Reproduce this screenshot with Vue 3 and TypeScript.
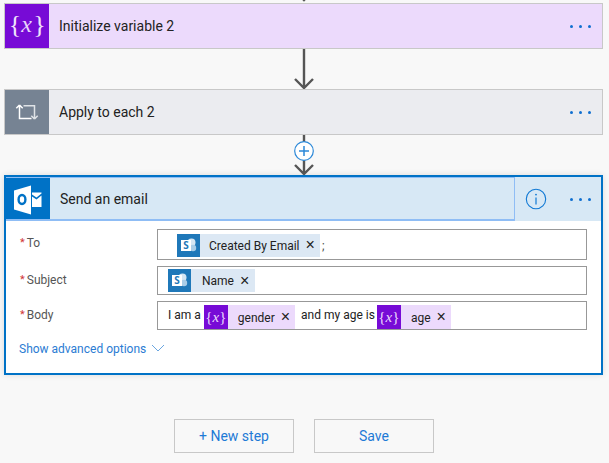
<script setup lang="ts">
const topCards = [
  { title: 'Initialize variable 2', kind: 'var' },
  { title: 'Apply to each 2', kind: 'loop' },
]
</script>

<template>
  <div class="page">
    <div class="stub">
      <svg width="24" height="3" viewBox="0 0 24 3"><path d="M3 -9 L12 0 L21 -9 M12 -12 V1" class="arrow" /></svg>
    </div>

    <template v-for="(c, i) in topCards" :key="c.title">
      <div class="card" :class="c.kind">
        <div class="card-icon">
          <svg v-if="c.kind === 'var'" width="44" height="44" viewBox="0 0 44 44">
            <text x="10" y="29" text-anchor="middle" class="brace">{</text>
            <text x="21.5" y="27.5" text-anchor="middle" class="varx">x</text>
            <text x="34.5" y="29" text-anchor="middle" class="brace">}</text>
          </svg>
          <svg v-else width="44" height="44" viewBox="0 0 44 44">
            <path d="M14.5 15 V28.5 H26.5 M14.5 15 L11.3 18.2 M14.5 15 L17.7 18.2" class="loop-line" />
            <path d="M18.5 15.7 H29.5 V29 M29.5 29 L26.3 25.8 M29.5 29 L32.7 25.8" class="loop-line dim" />
          </svg>
        </div>
        <div class="card-title">{{ c.title }}</div>
        <div class="dots"><i></i><i></i><i></i></div>
      </div>
      <div class="connector">
        <svg width="24" height="40" viewBox="0 0 24 40">
          <path d="M12 0 V39 M3 30 L12 39 L21 30" class="arrow" />
        </svg>
        <span v-if="i === 1" class="plus">
          <svg width="20" height="20" viewBox="0 0 20 20">
            <circle cx="10" cy="10" r="9.3" fill="#fff" stroke="#2b88d8" stroke-width="1.2" />
            <path d="M10 5 V15 M5 10 H15" stroke="#2b88d8" stroke-width="1.5" />
          </svg>
        </span>
      </div>
    </template>

    <section class="editor">
      <header class="editor-head">
        <div class="head-main">
          <div class="outlook">
            <svg width="32" height="32" viewBox="0 0 32 32">
              <path d="M2 7.5 L19 2.5 V31.5 L2 26.5 Z" fill="#fff" />
              <ellipse cx="10" cy="16.5" rx="3.4" ry="4.5" fill="none" stroke="#0072c6" stroke-width="2.4" />
              <path d="M20 9.5 H29.5 V10.5 L24.5 14.5 L20 11.5 Z M20 13.5 L24.5 16.5 L29.5 12.5 V24 H20 Z" fill="#fff" />
            </svg>
          </div>
          <div class="head-title">Send an email</div>
        </div>
        <div class="head-tools">
          <svg width="22" height="22" viewBox="0 0 22 22">
            <circle cx="11" cy="11" r="9.7" fill="none" stroke="#0f78d4" stroke-width="1.1" />
            <path d="M11 9.5 V16.5" stroke="#0f78d4" stroke-width="1.2" />
            <circle cx="11" cy="6.6" r="0.9" fill="#0f78d4" />
          </svg>
          <div class="dots head-dots"><i></i><i></i><i></i></div>
        </div>
      </header>

      <div class="form">
        <div class="row row-to">
          <div class="label"><b>*</b>To</div>
          <div class="field to-field">
            <span class="token sp">
              <span class="tok-icon">
                <svg width="23" height="23" viewBox="0 0 23 23">
                  <circle cx="14.5" cy="8.5" r="4" fill="#d5e6f3" />
                  <circle cx="16" cy="14" r="3.2" fill="#a9cde8" />
                  <rect x="4" y="6" width="10" height="11" fill="#fff" />
                  <text x="9" y="15" text-anchor="middle" class="sp-s">S</text>
                </svg>
              </span>
              <span class="tok-text tt-to">Created By Email</span><span class="x">×</span>
            </span>
            <span class="semi">;</span>
          </div>
        </div>
        <div class="row row-subject">
          <div class="label"><b>*</b>Subject</div>
          <div class="field subj-field">
            <span class="token sp">
              <span class="tok-icon">
                <svg width="23" height="23" viewBox="0 0 23 23">
                  <circle cx="14.5" cy="8.5" r="4" fill="#d5e6f3" />
                  <circle cx="16" cy="14" r="3.2" fill="#a9cde8" />
                  <rect x="4" y="6" width="10" height="11" fill="#fff" />
                  <text x="9" y="15" text-anchor="middle" class="sp-s">S</text>
                </svg>
              </span>
              <span class="tok-text tt-name">Name</span><span class="x x-name">×</span>
            </span>
          </div>
        </div>
        <div class="row row-body">
          <div class="label"><b>*</b>Body</div>
          <div class="field body-field">
            <span class="plain">I am a</span>
            <span class="token va">
              <span class="tok-icon"><span class="mini">{<em>x</em>}</span></span>
              <span class="tok-text">gender</span><span class="x">×</span>
            </span>
            <span class="plain">and my age is</span>
            <span class="token va">
              <span class="tok-icon"><span class="mini">{<em>x</em>}</span></span>
              <span class="tok-text">age</span><span class="x">×</span>
            </span>
          </div>
        </div>
        <div class="advanced">
          <span>Show advanced options</span>
          <svg width="14" height="8" viewBox="0 0 14 8"><path d="M1 1 L7 7 L13 1" fill="none" stroke="#6ba6e0" stroke-width="1" /></svg>
        </div>
      </div>
    </section>

    <div class="actions">
      <button class="btn" type="button">+ New step</button>
      <button class="btn" type="button">Save</button>
    </div>
  </div>
</template>

<style>
html, body { margin: 0; background: #f8f8f8; }
</style>

<style scoped>
.page {
  width: 609px;
  height: 463px;
  overflow: hidden;
  box-sizing: border-box;
  padding: 0 6px 0 4px;
  background: #f8f8f8;
  font-family: Roboto, "Open Sans", sans-serif;
  font-size: 12px;
  color: #222;
  display: flex;
  flex-direction: column;
}
.stub { height: 3px; display: flex; justify-content: center; overflow: hidden; padding-left: 1px; }
.stub svg { display: block; }
.arrow { fill: none; stroke: #555; stroke-width: 2.4; }
.card {
  height: 46px;
  box-sizing: border-box;
  border: 1px solid #c8c8c8;
  display: flex;
  align-items: center;
}
.card.var { background: #ecdafc; }
.card.loop { background: #ebecf0; }
.card-icon { width: 44px; height: 44px; flex: none; }
.card-icon svg { display: block; }
.var .card-icon { background: #770bd6; }
.loop .card-icon { background: #768393; }
.brace { font-family: "Liberation Serif", serif; font-size: 26px; fill: #f0e4fb; }
.varx { font-family: "Liberation Serif", serif; font-style: italic; font-size: 24px; fill: #e8d6fa; }
.loop-line { fill: none; stroke: #fff; stroke-width: 1.5; }
.loop-line.dim { stroke: #dfe3e7; }
.card-title { flex: 1; padding-left: 10px; font-size: 14px; }
.dots { display: flex; gap: 6px; width: 32px; flex: none; }
.dots i { width: 3px; height: 3px; border-radius: 50%; background: #0f6fd0; }
.connector {
  height: 40px;
  display: flex;
  justify-content: center;
  position: relative;
  padding-left: 1px;
}
.connector svg { display: block; }
.plus { position: absolute; left: 290px; top: 5.5px; }
.editor {
  height: 200px;
  box-sizing: border-box;
  border: 2px solid #0072c6;
  background: #fff;
  box-shadow: 0 0 6px rgba(0, 0, 0, 0.12);
}
.editor-head {
  display: flex;
  height: 44px;
  background: #d7e8f5;
}
.head-main {
  width: 509px;
  flex: none;
  box-sizing: border-box;
  display: flex;
  align-items: center;
  border: solid #8fbdf5;
  border-width: 1px 1px 2px 0;
  border-radius: 0 0 1px 0;
}
.outlook {
  width: 44px;
  height: 41px;
  background: #0072c6;
  display: flex;
  align-items: center;
  justify-content: center;
  flex: none;
}
.head-title { padding-left: 10px; font-size: 14px; }
.head-tools { flex: 1; display: flex; align-items: center; padding-left: 10px; }
.head-tools svg { display: block; }
.head-dots { margin-left: 23px; width: auto; }
.form { padding: 8px 14px 0 13px; }
.row { display: flex; }
.row-to { height: 31px; }
.row-subject { height: 29px; margin-top: 6px; }
.row-body { height: 29px; margin-top: 6px; }
.label { width: 138px; flex: none; font-size: 12px; color: #555; box-sizing: border-box; padding: 7px 0 0 1px; }
.label b { color: #d13438; font-weight: 400; font-size: 11px; margin-right: 2px; position: relative; top: -1px; }
.field {
  flex: 1;
  box-sizing: border-box;
  border: 1px solid #989898;
  background: #fff;
  display: flex;
  align-items: center;
  min-width: 0;
}
.to-field { padding-left: 19px; }
.subj-field { padding-left: 10px; }
.body-field { padding-left: 10px; }
.token { display: flex; align-items: center; height: 23px; font-size: 12px; color: #222; }
.to-field .token { margin-top: 1px; }
.token.sp { background: #dce8f4; }
.token.va { background: #ecdafc; height: 24px; align-self: flex-end; }
.tok-icon {
  width: 23px;
  height: 100%;
  flex: none;
  display: flex;
  align-items: center;
  justify-content: center;
}
.sp .tok-icon { background: #1f78b9; }
.sp .tok-icon svg { display: block; }
.sp-s { font-family: "Open Sans", sans-serif; font-size: 10px; font-weight: 700; fill: #1f78b9; }
.va .tok-icon { background: #770bd6; width: 24px; }
.mini { color: #ecdafc; font-family: "Liberation Serif", serif; font-size: 15px; }
.mini em { font-style: italic; }
.tok-text { padding-left: 10px; padding-top: 1px; }
.tt-to { padding-left: 9px; }
.tt-name { padding-left: 11px; }
.x { padding: 0 5px 0 6px; font-size: 16px; line-height: 1; font-family: "Liberation Sans", sans-serif; }
.x-name { padding-right: 6px; }
.semi { margin-left: 2px; font-size: 12px; color: #444; padding-top: 3px; }
.plain { font-size: 12px; margin-top: -1px; margin-right: 3px; }
.token.va + .plain { margin-left: 6px; margin-right: 2px; }
.advanced {
  margin-top: 12px;
  display: flex;
  align-items: center;
  gap: 5px;
  font-size: 12px;
  color: #2b7cd3;
}
.advanced svg { display: block; margin-top: -3px; }
.actions {
  display: flex;
  justify-content: flex-start;
  gap: 20px;
  margin: 44px 0 0 170px;
}
.btn {
  width: 120px;
  height: 34px;
  box-sizing: border-box;
  border: 1px solid #c8c8c8;
  background: #f8f8f8;
  color: #1e7ad6;
  font-family: inherit;
  font-size: 14px;
  padding: 0;
}
</style>
